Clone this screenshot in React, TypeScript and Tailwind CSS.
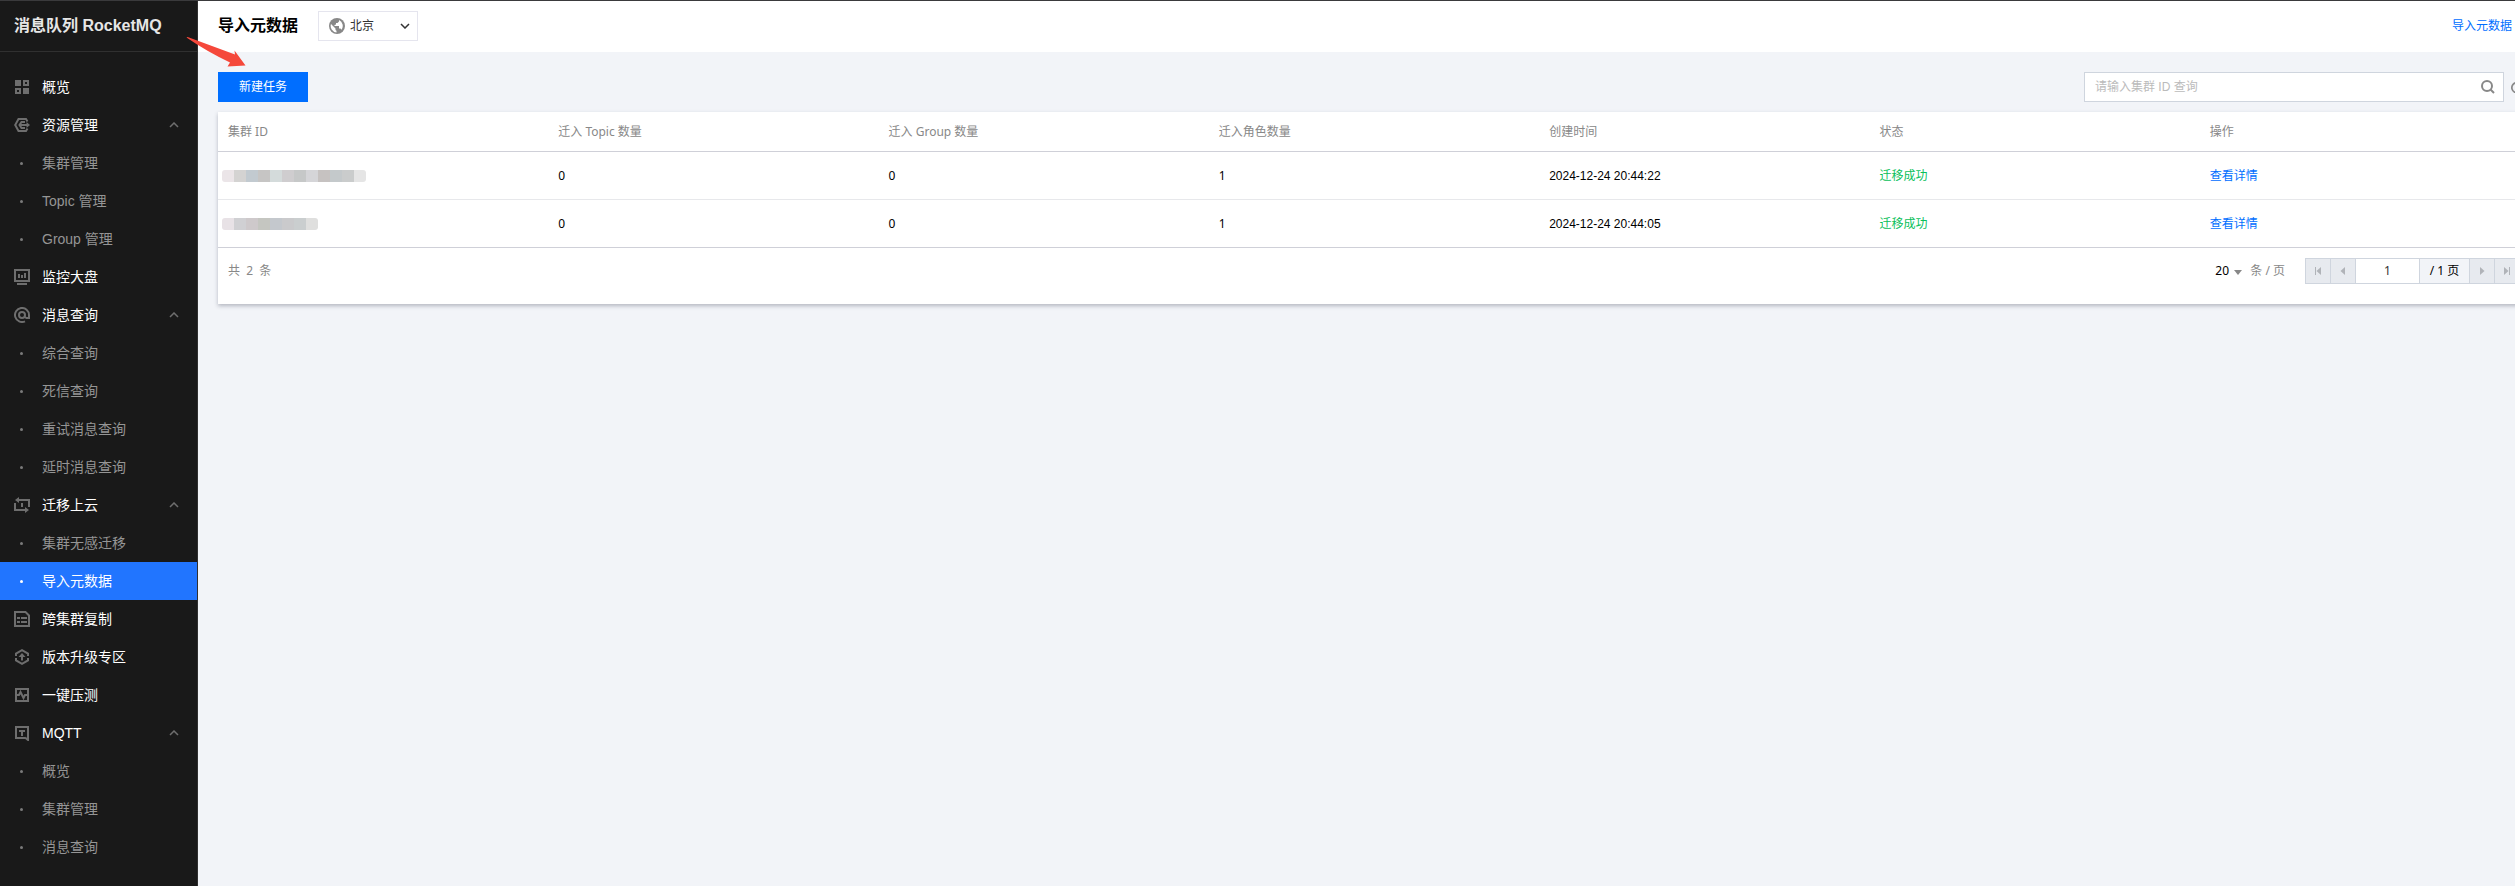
import { useState, type ReactNode } from 'react'

interface NavGroup {
  label: string
  icon: ReactNode
  children?: string[]
}

interface Task {
  id: string
  topics: number
  groups: number
  roles: number
  createdAt: string
  status: string
  mask: string[]
}

const icon = (children: ReactNode) => (
  <svg width="16" height="16" viewBox="0 0 16 16" fill="none" stroke="currentColor" strokeWidth="2" aria-hidden="true">
    {children}
  </svg>
)

const menu: NavGroup[] = [
  {
    label: '概览',
    icon: icon(
      <>
        <path d="M1 1h6v6H1zM9 9h6v6H9z" fill="currentColor" stroke="none" />
        <path d="M10 2h4v4h-4zM2 10h4v4H2z" />
      </>
    ),
  },
  {
    label: '资源管理',
    icon: icon(
      <>
        <path d="M13.500 4.500L12 2H4.500L1.200 8l3.300 6H12l1.500-2.500" />
        <path d="M11 5H7.500L5.500 8l2 3H11M6 8h8" />
        <path d="M12.500 5L16 8l-3.500 3z" fill="currentColor" stroke="none" />
      </>
    ),
    children: ['集群管理', 'Topic 管理', 'Group 管理'],
  },
  {
    label: '监控大盘',
    icon: icon(
      <>
        <path d="M1 1h14v11H1zM3 15h10" />
        <path d="M5 5v4M8 6v3M11 4v5" />
      </>
    ),
  },
  {
    label: '消息查询',
    icon: icon(
      <>
        <path d="M11 14.300A7 7 0 1 1 15 8v3h-2.500L10 9.500" />
        <circle cx="8" cy="8" r="3" />
      </>
    ),
    children: ['综合查询', '死信查询', '重试消息查询', '延时消息查询'],
  },
  {
    label: '迁移上云',
    icon: icon(
      <>
        <path d="M3 3h12v7M13 13H1V6M8 6v4" />
        <path d="M5 0v6L1 3zM11 10v6l4-3z" fill="currentColor" stroke="none" />
      </>
    ),
    children: ['集群无感迁移', '导入元数据'],
  },
  {
    label: '跨集群复制',
    icon: icon(
      <>
        <path d="M1 1h10.500L15 4.500V15H1z" />
        <path d="M3 7h3M7 7h6M3 11h3M7 11h6" />
      </>
    ),
  },
  {
    label: '版本升级专区',
    icon: icon(
      <>
        <path d="M2 7V4.500L8 1.200l6 3.300V7M2 9v2.500l6 3.300 6-3.300V9" />
        <path d="M8 11.500V6" />
        <path d="M4.500 8L8 4l3.500 4z" fill="currentColor" stroke="none" />
      </>
    ),
  },
  {
    label: '一键压测',
    icon: icon(
      <>
        <path d="M2 2h12v12H2z" />
        <path d="M3 8h2l1.500-3 3 6L11 8h2" />
      </>
    ),
  },
  {
    label: 'MQTT',
    icon: icon(
      <>
        <path d="M11 13H2V2h12v13l-3-2.500" />
        <path d="M5 6h6M8 6v5" />
      </>
    ),
    children: ['概览', '集群管理', '消息查询'],
  },
]

const tasks: Task[] = [
  {
    id: 'task-1',
    topics: 0,
    groups: 0,
    roles: 1,
    createdAt: '2024-12-24 20:44:22',
    status: '迁移成功',
    mask: [
      'bg-[#ebe5e8]', 'bg-[#d4d3d2]', 'bg-[#c2cad0]', 'bg-[#c6c5c4]', 'bg-[#d4dbdb]', 'bg-[#cfcdcf]',
      'bg-[#c6c8c8]', 'bg-[#d5d5d8]', 'bg-[#c6c2c1]', 'bg-[#c4c9cb]', 'bg-[#cacccc]', 'bg-[#e5e5e5]',
    ],
  },
  {
    id: 'task-2',
    topics: 0,
    groups: 0,
    roles: 1,
    createdAt: '2024-12-24 20:44:05',
    status: '迁移成功',
    mask: [
      'bg-[#e8e2e6]', 'bg-[#d0d0d3]', 'bg-[#cec9cb]', 'bg-[#c5c6c1]',
      'bg-[#c4c8cd]', 'bg-[#cacacc]', 'bg-[#cacecf]', 'bg-[#dfdfde]',
    ],
  },
]

const columns = ['集群 ID', '迁入 Topic 数量', '迁入 Group 数量', '迁入角色数量', '创建时间', '状态', '操作']

export default function App() {
  return (
    <div className="relative flex min-h-screen overflow-hidden border-t border-[#3a3a3c] bg-[#f2f4f8] font-['Liberation_Sans','Noto_Sans_CJK_SC',sans-serif] text-xs text-black">
      <Sidebar />
      {/* The workspace is a little wider than the window and runs off its right edge */}
      <div className="min-w-0 flex-1">
        <div className="w-[calc(100%+35px)]">
          <PageHeader />
          <main className="p-5">
            <Toolbar />
            <TaskPanel />
          </main>
        </div>
      </div>
      <PointerArrow />
    </div>
  )
}

function Sidebar() {
  return (
    <aside className="w-[198px] shrink-0 border-r border-[#303030] bg-[#191919]">
      <h2 className="flex h-[51px] items-center border-b border-[#303030] px-3.5 text-base font-bold text-[#e6e6e6]">
        消息队列 RocketMQ
      </h2>
      <nav className="pt-4">
        {menu.map((group) => (
          <SidebarGroup key={group.label} group={group} />
        ))}
      </nav>
    </aside>
  )
}

function SidebarGroup({ group }: { group: NavGroup }) {
  const [open, setOpen] = useState(true)

  if (!group.children) {
    return (
      <a href="#" className="flex h-[38px] items-center gap-3 px-3.5 text-sm text-white">
        <span className="text-[#6e6e6e]">{group.icon}</span>
        {group.label}
      </a>
    )
  }

  return (
    <div>
      <button
        type="button"
        aria-expanded={open}
        onClick={() => setOpen(!open)}
        className="flex h-[38px] w-full items-center gap-3 pr-[18px] pl-3.5 text-left text-sm text-white"
      >
        <span className="text-[#6e6e6e]">{group.icon}</span>
        <span className="flex-1">{group.label}</span>
        <svg width="10" height="6" viewBox="0 0 10 6" fill="none" stroke="#6e6e6e" strokeWidth="1.5" aria-hidden="true">
          <path d="M1 5l4-4 4 4" />
        </svg>
      </button>
      {open &&
        group.children.map((child) => {
          const active = child === '导入元数据'
          return (
            <a
              key={child}
              href="#"
              className={`flex h-[38px] items-center gap-[19px] pl-5 text-sm ${
                active ? 'bg-[#2175ff] text-white' : 'text-[#959595]'
              }`}
            >
              <span className={`size-[3px] rounded-full ${active ? 'bg-white' : 'bg-[#7a7a7a]'}`} />
              {child}
            </a>
          )
        })}
    </div>
  )
}

function PageHeader() {
  return (
    <header className="flex h-[51px] items-center bg-white px-5 pb-px">
      <h1 className="text-base font-bold">导入元数据</h1>
      <div className="relative ml-5">
        <select
          aria-label="地域"
          className="block h-[30px] w-[100px] appearance-none border border-[#e5e5ee] bg-white pl-[31px] text-[#333]"
        >
          <option>北京</option>
        </select>
        <svg className="pointer-events-none absolute top-[7px] left-[11px]" width="16" height="16" viewBox="0 0 16 16" aria-hidden="true">
          <circle cx="8" cy="8" r="8" fill="#888" />
          <path d="M2 6l4.500 4.500V12l1 .8v1.700A6.500 6.500 0 0 1 2 6z" fill="#fff" />
          <path d="M10 2v1.500L8.500 5H7v1.500L5.500 7v1H10v2.500h1.500l1 1.200A6.500 6.500 0 0 0 10 2z" fill="#fff" />
        </svg>
        <svg className="pointer-events-none absolute top-3 right-2" width="10" height="6" viewBox="0 0 10 6" fill="none" stroke="#333" strokeWidth="1.5" aria-hidden="true">
          <path d="M1 1l4 4 4-4" />
        </svg>
      </div>
      <a href="#" className="ml-auto flex items-center gap-1 text-[#006eff]">
        导入元数据
        <svg width="14" height="14" viewBox="0 0 14 14" fill="none" stroke="currentColor" aria-hidden="true">
          <path d="M6 2H2v10h10V8M8 2h4v4M12 2L6 8" />
        </svg>
      </a>
    </header>
  )
}

function Toolbar() {
  return (
    <div className="mb-2.5 flex items-center justify-between">
      <button type="button" className="h-[30px] w-[90px] bg-[#006eff] text-white">
        新建任务
      </button>
      <div className="flex items-center">
        <div className="relative">
          <input
            type="text"
            aria-label="搜索集群"
            placeholder="请输入集群 ID 查询"
            className="block h-[30px] w-[420px] border border-[#cfd5de] bg-white pr-9 pl-2.5 placeholder:text-[#bbb]"
          />
          <svg className="pointer-events-none absolute top-2 right-[9px]" width="14" height="14" viewBox="0 0 14 14" fill="none" stroke="#888" strokeWidth="2" aria-hidden="true">
            <circle cx="6" cy="6" r="5" />
            <path d="M9.500 9.500L13 13" />
          </svg>
        </div>
        <button type="button" aria-label="刷新" className="flex h-[30px] w-[26px] items-center justify-center">
          <svg width="12" height="12" viewBox="0 0 14 14" fill="none" stroke="#888" strokeWidth="2" aria-hidden="true">
            <path d="M12 4.500A6 6 0 1 0 13 8" />
            <path d="M13 1v4H9" />
          </svg>
        </button>
      </div>
    </div>
  )
}

function TaskPanel() {
  return (
    <section className="bg-white shadow-[0_2px_4px_rgba(54,58,80,0.32)]">
      <table className="w-full table-fixed border-separate border-spacing-0 text-left font-['Noto_Sans','Noto_Sans_CJK_SC',sans-serif]">
        <thead>
          <tr className="text-[#888]">
            {columns.map((column) => (
              <th key={column} scope="col" className="h-10 border-b border-[#cfd0d8] px-2.5 py-0 font-normal">
                {column}
              </th>
            ))}
          </tr>
        </thead>
        <tbody className="[&_td]:h-12 [&_td]:border-b [&_td]:border-[#e7e8eb] [&_tr:last-child_td]:border-[#cfd0d8]">
          {tasks.map((task) => (
            <tr key={task.id}>
              <td className="px-1">
                <MaskedId colors={task.mask} />
              </td>
              <td className="px-2.5">{task.topics}</td>
              <td className="px-2.5">{task.groups}</td>
              <td className="px-2.5">{task.roles}</td>
              <td className="px-2.5 font-['Liberation_Sans',sans-serif]">{task.createdAt}</td>
              <td className="px-2.5 text-[#0abf5b]">{task.status}</td>
              <td className="px-2.5">
                <a href="#" className="text-[#006eff]">
                  查看详情
                </a>
              </td>
            </tr>
          ))}
        </tbody>
      </table>
      <Pagination />
    </section>
  )
}

function MaskedId({ colors }: { colors: string[] }) {
  return (
    <div className="flex w-fit overflow-hidden rounded-[3px]">
      {colors.map((color, index) => (
        <span key={index} className={`size-3 ${color}`} />
      ))}
    </div>
  )
}

function Pagination() {
  const step = 'flex w-[26px] items-center justify-center border border-[#cfd5de] bg-[#e7eaef] text-[#b0b3b8]'

  return (
    <div className="flex items-center px-2.5 pt-2.5 pb-5 font-['Noto_Sans','Noto_Sans_CJK_SC',sans-serif] text-[#888]">
      <p className="whitespace-pre">共  2  条</p>
      <label className="relative ml-auto flex items-center gap-2">
        <select aria-label="每页条数" className="w-[27px] appearance-none text-black">
          <option>20</option>
        </select>
        <svg className="pointer-events-none absolute top-[7px] left-[19px]" width="8" height="5" viewBox="0 0 8 5" fill="#888" aria-hidden="true">
          <path d="M0 0h8L4 5z" />
        </svg>
        条 / 页
      </label>
      <div className="ml-5 flex h-[26px] -space-x-px">
        <button type="button" aria-label="首页" className={step}>
          <svg width="8" height="8" viewBox="0 0 8 8" fill="currentColor" aria-hidden="true">
            <path d="M1 0h1v8H1zM7 0v8L2.500 4z" />
          </svg>
        </button>
        <button type="button" aria-label="上一页" className={step}>
          <svg width="8" height="8" viewBox="0 0 8 8" fill="currentColor" aria-hidden="true">
            <path d="M6 0v8L1.500 4z" />
          </svg>
        </button>
        <input
          type="text"
          aria-label="页码"
          defaultValue="1"
          className="w-[65px] border border-[#cfd5de] bg-white text-center text-[#333]"
        />
        <span className="flex w-[51px] items-center justify-center border border-[#cfd5de] bg-[#f2f4f8] text-black">
          / 1 页
        </span>
        <button type="button" aria-label="下一页" className={step}>
          <svg width="8" height="8" viewBox="0 0 8 8" fill="currentColor" aria-hidden="true">
            <path d="M2 0v8l4.500-4z" />
          </svg>
        </button>
        <button type="button" aria-label="末页" className={step}>
          <svg width="8" height="8" viewBox="0 0 8 8" fill="currentColor" aria-hidden="true">
            <path d="M1 0v8l4.500-4zM6 0h1v8H6z" />
          </svg>
        </button>
      </div>
    </div>
  )
}

// Hint arrow that points at the "新建任务" button
function PointerArrow() {
  return (
    <svg className="pointer-events-none absolute top-9 left-[186px]" width="60" height="30" viewBox="0 0 60 30" aria-hidden="true">
      <path d="M0.500 0.500Q1.500-.3 3 .5L49 17.500 48.500 13.500 59.500 28.500 41.500 29.500 44 25.500Q20 14 .5.500z" fill="#f5483b" />
    </svg>
  )
}
